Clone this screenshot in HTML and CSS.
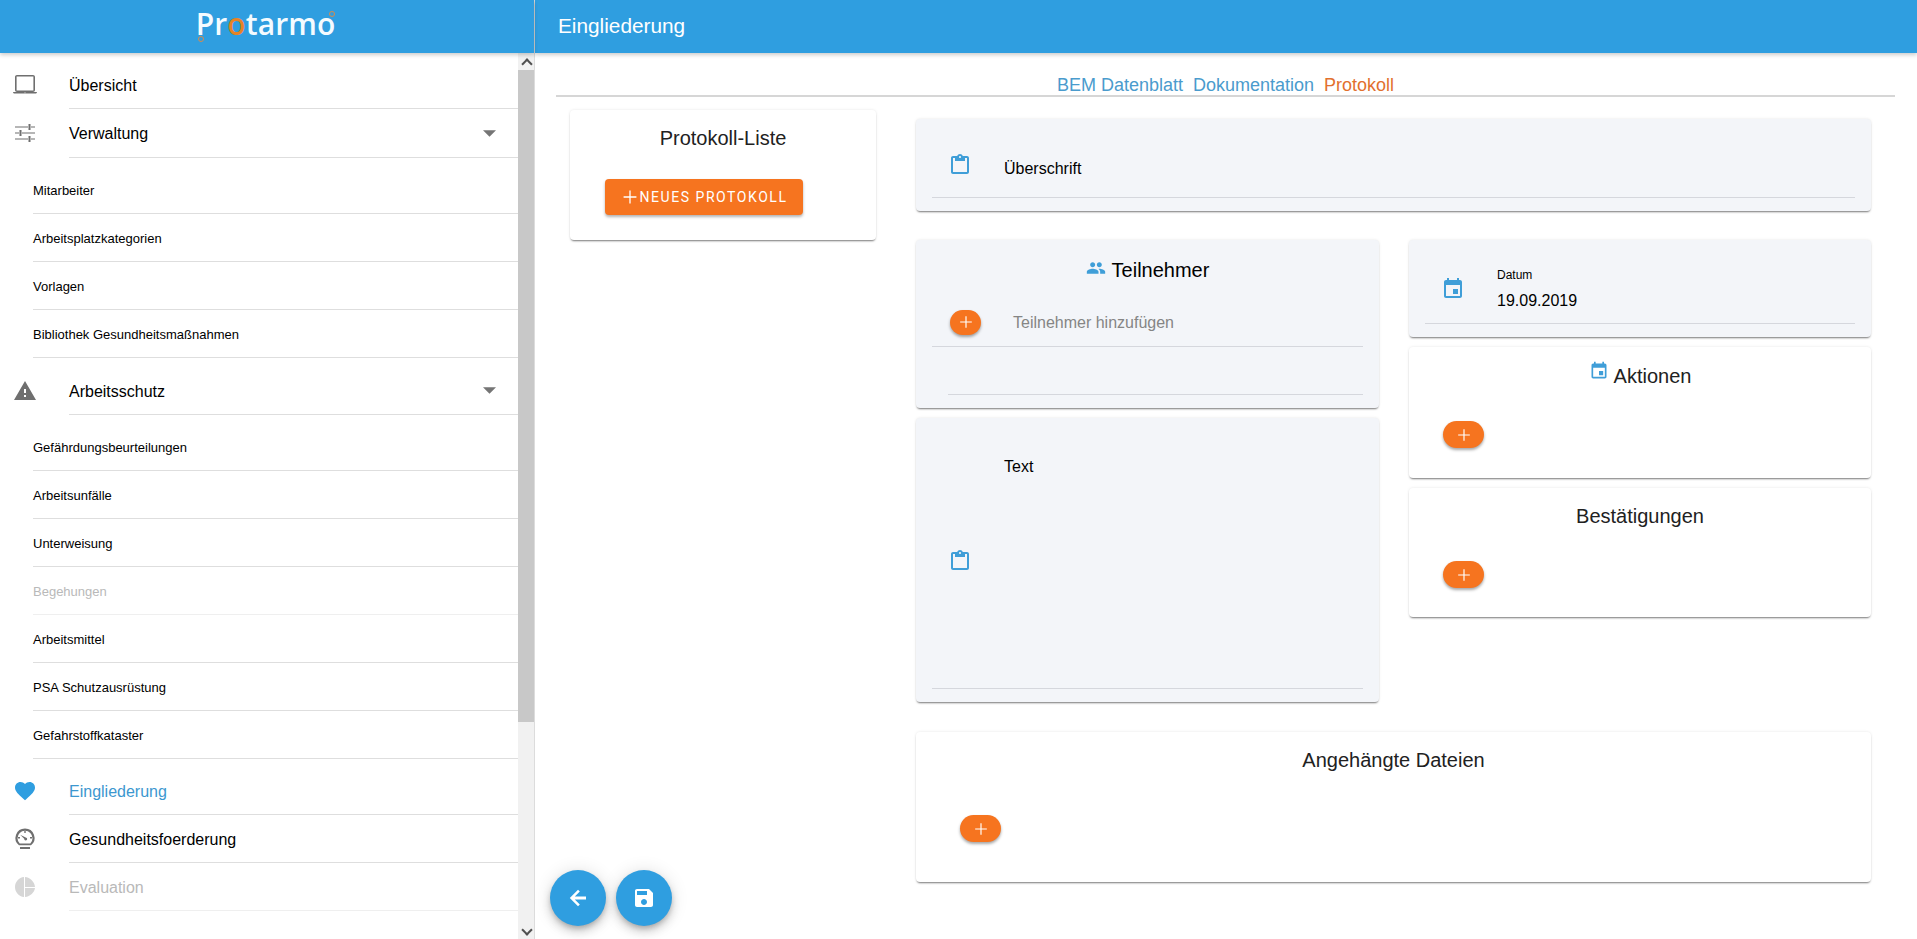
FILE: index.html
```html
<!DOCTYPE html>
<html lang="de">
<head>
<meta charset="utf-8">
<title>Eingliederung</title>
<link rel="stylesheet" href="styles.css">
</head>
<body>
<svg class="sprite" aria-hidden="true">
  <symbol id="i-laptop" viewBox="0 0 24 24"><path d="M20 19c1.100 0 2-.9 2-2V4c0-1.100-.9-2-2-2H4c-1.100 0-2 .9-2 2v13c0 1.100.9 2 2 2H0c0 .9.6 1.500 1.500 1.500h21c.9 0 1.500-.6 1.500-1.500h-4zM3.600 3.600h16.800v13.800H3.600zM12 19.300c.3 0 .5.2.5.5s-.2.5-.5.5-.5-.2-.5-.5.2-.5.5-.5z" fill-rule="evenodd"/></symbol>
  <symbol id="i-tune" viewBox="0 0 24 24"><path d="M2 5.500h13v1H2zM18 5.500h4v1h-4zM15.500 3h2v6h-2zM2 11.500h4v1H2zM9 11.500h13v1H9zM6.500 9h2v6h-2zM2 17.500h13v1H2zM18 17.500h4v1h-4zM15.500 15h2v6h-2z"/></symbol>
  <symbol id="i-warning" viewBox="0 0 24 24"><path d="M1 21h22L12 2 1 21zm12-3h-2v-2h2v2zm0-4h-2v-4h2v4z"/></symbol>
  <symbol id="i-heart" viewBox="0 0 24 24"><path d="M12 21.350l-1.450-1.320C5.400 15.360 2 12.280 2 8.500 2 5.420 4.420 3 7.500 3c1.740 0 3.410.81 4.500 2.090C13.090 3.810 14.760 3 16.500 3 19.580 3 22 5.420 22 8.500c0 3.780-3.400 6.860-8.550 11.540L12 21.350z"/></symbol>
  <symbol id="i-gauge" viewBox="0 0 24 24"><path d="M12 1.500a9.500 9.500 0 0 0-6 16.870h12A9.500 9.500 0 0 0 12 1.500zm5.300 15H6.700a7.500 7.500 0 1 1 10.600 0zM7 20h10v2H7zM11.200 11.800l-4-4 5.500 2.600a1.500 1.500 0 1 1-1.500 1.400zM11.300 4h1.400v2h-1.400zM17 10h2v1.400h-2zM5 10h2v1.400H5z"/></symbol>
  <symbol id="i-pie" viewBox="0 0 24 24"><path d="M11 2v20c-5.070-.5-9-4.790-9-10s3.930-9.500 9-10zm1.030 0v9.990H22c-.47-5.240-4.740-9.520-9.970-9.990zm0 10.990V22c5.240-.47 9.500-4.750 9.970-9.010h-9.970z"/></symbol>
  <symbol id="i-people" viewBox="0 0 24 24"><path d="M16 11c1.660 0 2.990-1.340 2.990-3S17.660 5 16 5c-1.660 0-3 1.340-3 3s1.340 3 3 3zm-8 0c1.660 0 2.990-1.340 2.990-3S9.660 5 8 5C6.340 5 5 6.340 5 8s1.340 3 3 3zm0 2c-2.330 0-7 1.170-7 3.500V19h14v-2.500c0-2.330-4.670-3.500-7-3.500zm8 0c-.29 0-.62.02-.97.05 1.160.84 1.970 1.970 1.970 3.450V19h6v-2.500c0-2.330-4.670-3.500-7-3.500z"/></symbol>
  <symbol id="i-event" viewBox="0 0 24 24"><path d="M17 12h-5v5h5v-5zM16 1v2H8V1H6v2H5c-1.110 0-1.990.9-1.990 2L3 19c0 1.100.89 2 2 2h14c1.100 0 2-.9 2-2V5c0-1.100-.9-2-2-2h-1V1h-2zm3 18H5V8h14v11z"/></symbol>
  <symbol id="i-clip" viewBox="0 0 24 24"><path d="M19 3h-4.180C14.400 1.840 13.300 1 12 1c-1.300 0-2.400.84-2.820 2H5c-1.100 0-2 .9-2 2v14c0 1.100.9 2 2 2h14c1.100 0 2-.9 2-2V5c0-1.100-.9-2-2-2zm-7 0c.55 0 1 .45 1 1s-.45 1-1 1-1-.45-1-1 .45-1 1-1zm7 16H5V5h2v3h10V5h2v14z"/></symbol>
  <symbol id="i-back" viewBox="0 0 24 24"><path d="M20 10.600H8.800l5-5L12 3.800 3.800 12l8.200 8.200 1.800-1.800-5-5H20z"/></symbol>
  <symbol id="i-save" viewBox="0 0 24 24"><path d="M17 3H5c-1.110 0-2 .9-2 2v14c0 1.100.89 2 2 2h14c1.100 0 2-.9 2-2V7l-4-4zm-5 16c-1.660 0-3-1.340-3-3s1.340-3 3-3 3 1.340 3 3-1.340 3-3 3zm3-10H5V5h10v4z"/></symbol>
  <symbol id="i-add" viewBox="0 0 24 24"><path d="M19 12.700h-6.300V19h-1.400v-6.300H5v-1.400h6.300V5h1.400v6.300H19z"/></symbol>
  <symbol id="i-drop" viewBox="0 0 24 24"><path d="M0 6h24L12 18z"/></symbol>
</svg>

<div class="app">
  <aside class="side">
    <header class="brand">
      <div class="logo"><span class="dot dot-low"></span>Pr<span class="logo-o">o</span>tarmo<span class="dot dot-high"></span></div>
    </header>
    <div class="side-body">
      <nav class="nav">
        <a class="row"><svg class="row-icon"><use href="#i-laptop"/></svg><span class="row-label">Übersicht</span></a>
        <a class="row row-tall"><svg class="row-icon"><use href="#i-tune"/></svg><span class="row-label">Verwaltung<svg class="caret"><use href="#i-drop"/></svg></span></a>
        <div class="sub sub-first">
          <a class="sub-row">Mitarbeiter</a>
          <a class="sub-row">Arbeitsplatzkategorien</a>
          <a class="sub-row">Vorlagen</a>
          <a class="sub-row">Bibliothek Gesundheitsmaßnahmen</a>
        </div>
        <a class="row"><svg class="row-icon"><use href="#i-warning"/></svg><span class="row-label">Arbeitsschutz<svg class="caret"><use href="#i-drop"/></svg></span></a>
        <div class="sub">
          <a class="sub-row">Gefährdungsbeurteilungen</a>
          <a class="sub-row">Arbeitsunfälle</a>
          <a class="sub-row">Unterweisung</a>
          <a class="sub-row is-off">Begehungen</a>
          <a class="sub-row">Arbeitsmittel</a>
          <a class="sub-row">PSA Schutzausrüstung</a>
          <a class="sub-row">Gefahrstoffkataster</a>
        </div>
        <a class="row is-active"><svg class="row-icon"><use href="#i-heart"/></svg><span class="row-label">Eingliederung</span></a>
        <a class="row"><svg class="row-icon"><use href="#i-gauge"/></svg><span class="row-label">Gesundheitsfoerderung</span></a>
        <a class="row is-off"><svg class="row-icon"><use href="#i-pie"/></svg><span class="row-label">Evaluation</span></a>
      </nav>
      <div class="scrollbar">
        <span class="sb-btn sb-up"></span>
        <span class="sb-thumb"></span>
        <span class="sb-rest"></span>
        <span class="sb-btn sb-down"></span>
      </div>
    </div>
  </aside>

  <div class="main">
    <header class="topbar">Eingliederung</header>
    <div class="tabs">
      <a class="tab">BEM Datenblatt</a>
      <a class="tab">Dokumentation</a>
      <a class="tab is-current">Protokoll</a>
    </div>
    <div class="content">
      <section class="list-col">
        <div class="card list-card">
          <h2 class="title">Protokoll-Liste</h2>
          <button class="new-btn"><svg class="new-plus"><use href="#i-add"/></svg>NEUES PROTOKOLL</button>
        </div>
      </section>

      <section class="form-col">
        <div class="card card-grey head-card">
          <div class="field field-head">
            <svg class="f-icon"><use href="#i-clip"/></svg>
            <span class="f-text">Überschrift</span>
          </div>
        </div>

        <div class="form-grid">
          <div class="stack">
            <div class="card card-grey people-card">
              <h2 class="title title-dark"><svg class="t-icon t-people"><use href="#i-people"/></svg>Teilnehmer</h2>
              <div class="field field-add">
                <button class="plus plus-sm"><svg><use href="#i-add"/></svg></button>
                <span class="placeholder">Teilnehmer hinzufügen</span>
              </div>
              <div class="people-empty"></div>
            </div>
            <div class="card card-grey text-card">
              <div class="field field-text">
                <svg class="f-icon f-icon-low"><use href="#i-clip"/></svg>
                <span class="f-text f-text-top">Text</span>
              </div>
            </div>
          </div>

          <div class="stack">
            <div class="card card-grey date-card">
              <div class="field field-date">
                <svg class="f-icon"><use href="#i-event"/></svg>
                <div class="date-vals">
                  <span class="date-label">Datum</span>
                  <span class="date-value">19.09.2019</span>
                </div>
              </div>
            </div>
            <div class="card action-card">
              <h2 class="title title-aktionen"><svg class="t-icon t-event"><use href="#i-event"/></svg>Aktionen</h2>
              <button class="plus plus-lg"><svg><use href="#i-add"/></svg></button>
            </div>
            <div class="card confirm-card">
              <h2 class="title title-confirm">Bestätigungen</h2>
              <button class="plus plus-lg"><svg><use href="#i-add"/></svg></button>
            </div>
          </div>
        </div>

        <div class="card files-card">
          <h2 class="title">Angehängte Dateien</h2>
          <button class="plus plus-lg plus-files"><svg><use href="#i-add"/></svg></button>
        </div>
      </section>
    </div>

    <div class="fabs">
      <button class="fab"><svg><use href="#i-back"/></svg></button>
      <button class="fab"><svg><use href="#i-save"/></svg></button>
    </div>
  </div>
</div>
</body>
</html>
```
FILE: styles.css
```css
* { box-sizing: border-box; }
html, body { height: 100%; }
body {
  margin: 0;
  overflow: hidden;
  background: #fff;
  color: #000;
  font-family: "Liberation Sans", Arial, sans-serif;
  font-size: 16px;
}
.sprite { display: none; }
button { font-family: inherit; border: 0; padding: 0; cursor: pointer; }

.app { display: flex; height: 939px; }

/* sidebar */
.side {
  width: 535px;
  flex: none;
  display: flex;
  flex-direction: column;
  border-right: 1px solid #dcdcdc;
}
.brand {
  height: 53px;
  flex: none;
  background: #2f9ee0;
  display: flex;
  justify-content: center;
  position: relative;
  z-index: 2;
  box-shadow: 0 2px 4px rgba(0,0,0,.2);
}
.logo {
  position: relative;
  margin-top: 3px;
  margin-left: -3px;
  color: #f4fbff;
  font-family: "Open Sans", sans-serif;
  font-size: 30px;
  font-weight: 600;
  line-height: 42px;
  letter-spacing: .1px;
}
.logo-o { color: #e58326; font-weight: 600; }
.dot {
  position: absolute;
  width: 6px;
  height: 6px;
  border-radius: 50%;
  border: 1.500px solid #d98a4a;
}
.dot-low { left: 2px; top: 33px; }
.dot-high { right: 0; top: 8px; }

.side-body { flex: 1; display: flex; min-height: 0; }
.nav { flex: 1; padding-top: 8px; }
.row {
  display: flex;
  height: 48px;
  color: #000;
}
.row-tall { height: 49px; }
.row-icon {
  width: 24px;
  height: 24px;
  margin: 12px 0 0 13px;
  flex: none;
  fill: #6f6f6f;
}
.row-label {
  flex: 1;
  margin-left: 32px;
  padding-top: 2px;
  display: flex;
  align-items: center;
  justify-content: space-between;
  border-bottom: 1px solid #dedede;
  padding-right: 22px;
}
.caret { width: 13px; height: 13px; fill: #757575; margin-top: -2px; }
.row.is-active { color: #3c97cf; }
.row.is-active .row-icon { fill: #2f9ee0; }
.row.is-off { color: #b9b9b9; }
.row.is-off .row-icon { fill: #d6d6d6; }
.row.is-off .row-label { border-color: #efefef; }

.sub { padding: 8px 0; }
.sub-first { padding-bottom: 9px; }
.sub-row {
  display: flex;
  align-items: center;
  height: 48px;
  margin-left: 33px;
  padding-top: 2px;
  font-size: 13px;
  border-bottom: 1px solid #dedede;
}
.sub-row.is-off { color: #b9b9b9; border-color: #efefef; }

.scrollbar {
  width: 16px;
  flex: none;
  background: #f1f1f1;
  display: flex;
  flex-direction: column;
}
.sb-btn {
  height: 17px;
  flex: none;
  position: relative;
}
.sb-btn::after {
  content: "";
  position: absolute;
  left: 5px;
  width: 6px;
  height: 6px;
  border-left: 2px solid #505050;
  border-top: 2px solid #505050;
}
.sb-up::after { top: 7px; transform: rotate(45deg); }
.sb-down::after { top: 4px; transform: rotate(225deg); }
.sb-thumb { height: 652px; flex: none; background: #c8c8c8; }
.sb-rest { flex: 1; }

/* main area */
.main {
  flex: 1;
  min-width: 0;
  position: relative;
  display: flex;
  flex-direction: column;
}
.topbar {
  height: 53px;
  flex: none;
  background: #2f9ee0;
  color: #fff;
  font-size: 20.800px;
  line-height: 52px;
  padding-left: 23px;
  box-shadow: 0 2px 4px rgba(0,0,0,.2);
}
.tabs {
  height: 44px;
  flex: none;
  margin: 0 22px 0 21px;
  display: flex;
  justify-content: center;
  align-items: flex-end;
  gap: 10px;
  border-bottom: 2px solid #d6d6d6;
  font-size: 18px;
  line-height: 20px;
}
.tab { color: #4a9bcd; }
.tab.is-current { color: #e2702e; }

.content { display: flex; align-items: flex-start; padding-left: 35px; }
.list-col { width: 306px; flex: none; margin-top: 13px; }
.form-col { width: 955px; flex: none; margin: 22px 0 0 40px; }

.card {
  background: #fff;
  border-radius: 4px;
  box-shadow: 0 2px 2px -1px rgba(0,0,0,.5), 0 0 3px rgba(0,0,0,.1);
}
.card-grey { background: #f3f5f9; }
.title {
  margin: 0;
  font-size: 20px;
  font-weight: 400;
  line-height: 24px;
  text-align: center;
  color: #212121;
}
.title-dark { color: #000; }

.list-card { height: 130px; padding-top: 16px; }
.new-btn {
  display: flex;
  align-items: center;
  justify-content: center;
  width: 198px;
  height: 36px;
  margin: 29px 0 0 35px;
  background: #f6741f;
  color: #fff;
  border-radius: 4px;
  font-family: Roboto, sans-serif;
  font-size: 14px;
  letter-spacing: 1.550px;
  box-shadow: 0 2px 3px rgba(0,0,0,.3);
}
.new-plus { width: 22px; height: 22px; fill: #fff; margin-left: -2px; margin-right: -1px; }

.field {
  margin: 0 16px;
  display: flex;
  align-items: center;
  border-bottom: 1px solid #d5d7dd;
}
.f-icon { width: 24px; height: 24px; flex: none; fill: #3f9ed8; margin-left: 16px; margin-right: 32px; }
.f-text { line-height: 20px; }

.head-card { height: 92px; }
.field-head { height: 79px; padding-top: 20px; }
.field-head .f-icon { margin-bottom: 6px; }
.field-head .f-text { margin-top: 2px; }

.form-grid {
  display: grid;
  grid-template-columns: 463px 462px;
  column-gap: 30px;
  margin-top: 29px;
}
.stack { display: flex; flex-direction: column; gap: 10px; }

.people-card { height: 168px; padding-top: 18px; }
.t-icon { width: 20px; height: 20px; fill: #3f9ed8; vertical-align: -1px; margin-right: 6px; }
.t-event { width: 20px; height: 20px; margin-right: 5px; vertical-align: 2px; }
.field-add { height: 49px; margin-top: 16px; padding-left: 18px; }
.placeholder { color: #858585; margin-left: 32px; padding-top: 2px; }
.people-empty {
  height: 48px;
  margin: 0 16px 0 32px;
  border-bottom: 1px solid #d5d7dd;
}
.plus {
  display: flex;
  align-items: center;
  justify-content: center;
  background: #f6741f;
  border-radius: 14px;
  box-shadow: 0 2px 3px rgba(0,0,0,.35);
}
.plus svg { width: 20px; height: 20px; fill: #fff; }
.plus-sm { width: 31px; height: 25px; flex: none; }
.plus-lg { width: 41px; height: 27px; }

.text-card { height: 284px; }
.field-text { height: 271px; }
.f-icon-low { margin-top: 16px; }
.f-text-top { align-self: flex-start; margin-top: 39px; }

.date-card { height: 97px; }
.field-date { height: 84px; }
.field-date .f-icon { margin-top: 14px; }
.date-vals { display: flex; flex-direction: column; margin-top: 15px; }
.date-label { font-size: 12px; line-height: 14px; }
.date-value { line-height: 20px; margin-top: 9px; }

.action-card { height: 131px; padding-top: 14px; }
.action-card .plus { margin: 36px 0 0 34px; }
.title-aktionen { height: 24px; }
.confirm-card { height: 129px; padding-top: 16px; }
.confirm-card .plus { margin: 33px 0 0 34px; }

.files-card { height: 150px; margin-top: 30px; padding-top: 16px; }
.plus-files { margin: 43px 0 0 44px; }

.fabs {
  position: absolute;
  left: 15px;
  bottom: 13px;
  display: flex;
  gap: 10px;
}
.fab {
  width: 56px;
  height: 56px;
  border-radius: 50%;
  background: #2f9ee0;
  display: flex;
  align-items: center;
  justify-content: center;
  box-shadow: 0 3px 5px -1px rgba(0,0,0,.2), 0 6px 10px 0 rgba(0,0,0,.14), 0 1px 18px 0 rgba(0,0,0,.12);
}
.fab svg { width: 24px; height: 24px; fill: #fff; }
```
